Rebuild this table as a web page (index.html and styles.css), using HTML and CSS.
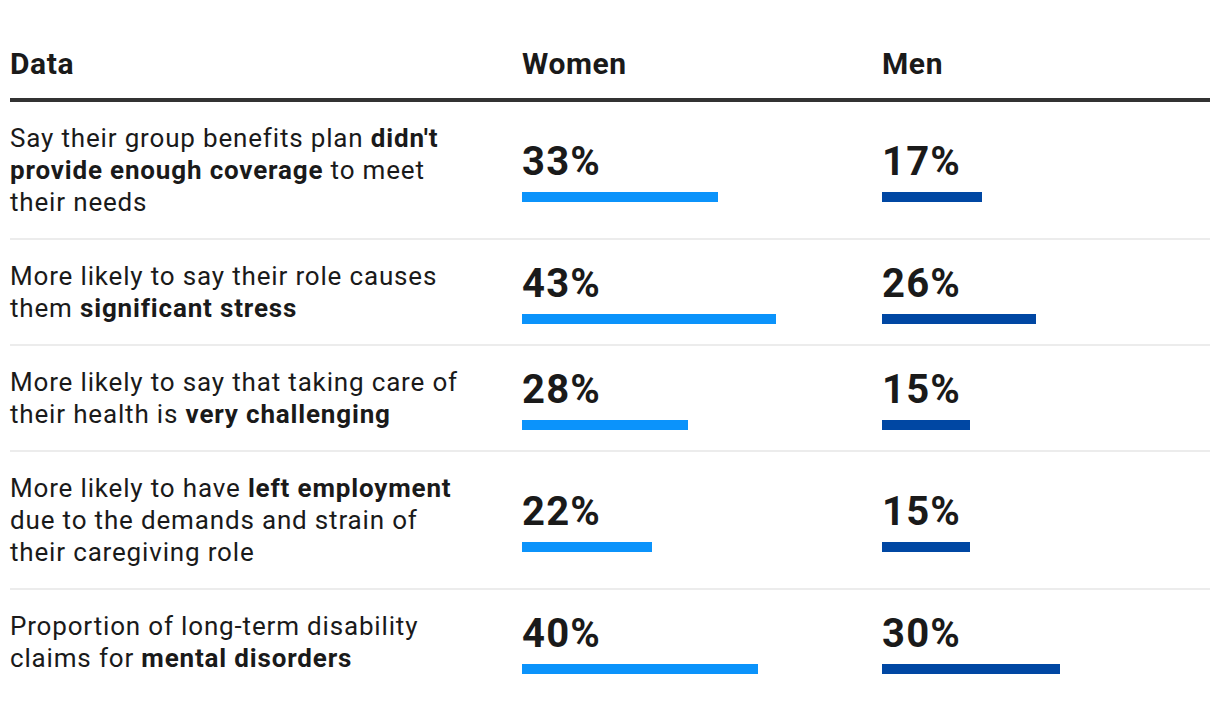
FILE: index.html
```html
<!DOCTYPE html>
<html lang="en">
<head>
<meta charset="utf-8">
<title>Data table</title>
<link rel="stylesheet" href="styles.css">
</head>
<body>
<div class="table">
  <div class="row head">
    <div class="cell">Data</div>
    <div class="cell">Women</div>
    <div class="cell">Men</div>
  </div>

  <div class="row">
    <div class="cell text">Say their group benefits plan <b>didn't provide enough coverage</b> to meet their needs</div>
    <div class="cell stat"><div class="num">33%</div><div class="bar women" style="width:196px"></div></div>
    <div class="cell stat"><div class="num">17%</div><div class="bar men" style="width:100px"></div></div>
  </div>

  <div class="row">
    <div class="cell text">More likely to say their role causes them <b>significant stress</b></div>
    <div class="cell stat"><div class="num">43%</div><div class="bar women" style="width:254px"></div></div>
    <div class="cell stat"><div class="num">26%</div><div class="bar men" style="width:154px"></div></div>
  </div>

  <div class="row">
    <div class="cell text">More likely to say that taking care of their health is <b>very challenging</b></div>
    <div class="cell stat"><div class="num">28%</div><div class="bar women" style="width:166px"></div></div>
    <div class="cell stat"><div class="num">15%</div><div class="bar men" style="width:88px"></div></div>
  </div>

  <div class="row">
    <div class="cell text">More likely to have <b>left employment</b> due to the demands and strain of their caregiving role</div>
    <div class="cell stat"><div class="num">22%</div><div class="bar women" style="width:130px"></div></div>
    <div class="cell stat"><div class="num">15%</div><div class="bar men" style="width:88px"></div></div>
  </div>

  <div class="row last">
    <div class="cell text">Proportion of long-term disability claims for <b>mental disorders</b></div>
    <div class="cell stat"><div class="num">40%</div><div class="bar women" style="width:236px"></div></div>
    <div class="cell stat"><div class="num">30%</div><div class="bar men" style="width:178px"></div></div>
  </div>
</div>
</body>
</html>
```

FILE: styles.css
```css
html, body {
  margin: 0;
  padding: 0;
  background: #ffffff;
}

body {
  font-family: Roboto, "Liberation Sans", Arial, sans-serif;
  color: #1a1a1a;
}

.table {
  margin: 0 10px;
  width: 1200px;
}

.row {
  display: grid;
  grid-template-columns: 512px 360px 1fr;
  align-items: center;
  border-bottom: 2px solid #ececec;
}

.row.last {
  border-bottom: none;
}

.row.head {
  align-items: end;
  padding: 48px 0 18px;
  border-bottom: 4px solid #333333;
  font-size: 30px;
  line-height: 32px;
  font-weight: 700;
  letter-spacing: 0.02em;
}

.text {
  padding: 20px 46px 20px 0;
  font-size: 26px;
  line-height: 32px;
  letter-spacing: 0.032em;
}

.text b {
  font-weight: 700;
}

.stat {
  display: flex;
  flex-direction: column;
  align-items: flex-start;
}

.num {
  font-size: 40px;
  line-height: 48px;
  font-weight: 700;
  letter-spacing: 0.03em;
}

.bar {
  height: 10px;
  margin-top: 6px;
}

.bar.women {
  background: #0b93fb;
}

.bar.men {
  background: #0047a3;
}
```
